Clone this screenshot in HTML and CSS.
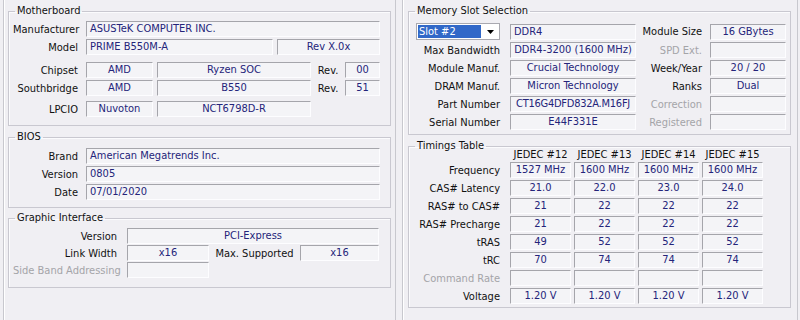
FILE: index.html
```html
<!DOCTYPE html>
<html lang="en">
<head>
    <meta charset="UTF-8">
    <meta name="viewport" content="width=device-width, initial-scale=1.0">
    <title>CPU-Z Mainboard / SPD</title>
    <link rel="stylesheet" href="styles.css">
</head>
<body>
    <div class="window">
        <!-- Mainboard tab -->
        <div class="pane pane-left">
            <fieldset class="group mb">
                <legend>Motherboard</legend>
                <div class="row">
                    <span class="lbl">Manufacturer</span>
                    <span class="fld left w294">ASUSTeK COMPUTER INC.</span>
                </div>
                <div class="row">
                    <span class="lbl">Model</span>
                    <span class="fld left w187">PRIME B550M-A</span>
                    <span class="fld w103 ml4">Rev X.0x</span>
                </div>
                <div class="row row-sep">
                    <span class="lbl">Chipset</span>
                    <span class="fld w67">AMD</span>
                    <span class="fld w154 ml4">Ryzen SOC</span>
                    <span class="sub-lbl w34">Rev.</span>
                    <span class="fld w35">00</span>
                </div>
                <div class="row">
                    <span class="lbl">Southbridge</span>
                    <span class="fld w67">AMD</span>
                    <span class="fld w154 ml4">B550</span>
                    <span class="sub-lbl w34">Rev.</span>
                    <span class="fld w35">51</span>
                </div>
                <div class="row row-sep2">
                    <span class="lbl">LPCIO</span>
                    <span class="fld w67">Nuvoton</span>
                    <span class="fld w154 ml4">NCT6798D-R</span>
                </div>
            </fieldset>

            <fieldset class="group bios">
                <legend>BIOS</legend>
                <div class="row">
                    <span class="lbl">Brand</span>
                    <span class="fld left w294">American Megatrends Inc.</span>
                </div>
                <div class="row">
                    <span class="lbl">Version</span>
                    <span class="fld left w294">0805</span>
                </div>
                <div class="row">
                    <span class="lbl">Date</span>
                    <span class="fld left w294">07/01/2020</span>
                </div>
            </fieldset>

            <fieldset class="group gi">
                <legend>Graphic Interface</legend>
                <div class="row">
                    <span class="lbl">Version</span>
                    <span class="fld w252">PCI-Express</span>
                </div>
                <div class="row">
                    <span class="lbl">Link Width</span>
                    <span class="fld w82">x16</span>
                    <span class="sub-lbl w91">Max. Supported</span>
                    <span class="fld w79">x16</span>
                </div>
                <div class="row">
                    <span class="lbl off">Side Band Addressing</span>
                    <span class="fld w82"></span>
                </div>
            </fieldset>
        </div>

        <!-- SPD tab -->
        <div class="pane pane-right">
            <fieldset class="group slot">
                <legend>Memory Slot Selection</legend>
                <div class="row row-first">
                    <div class="combo">
                        <span class="combo-value">Slot #2</span>
                        <span class="combo-btn">
                            <svg width="7" height="4" viewBox="0 0 7 4"><path d="M0 0h7L3.5 4z" fill="#000"/></svg>
                        </span>
                    </div>
                    <span class="fld left w126">DDR4</span>
                    <span class="lbl2">Module Size</span>
                    <span class="fld w76">16 GBytes</span>
                </div>
                <div class="row">
                    <span class="lbl">Max Bandwidth</span>
                    <span class="fld w126">DDR4-3200 (1600 MHz)</span>
                    <span class="lbl2 off">SPD Ext.</span>
                    <span class="fld w76"></span>
                </div>
                <div class="row">
                    <span class="lbl">Module Manuf.</span>
                    <span class="fld w126">Crucial Technology</span>
                    <span class="lbl2">Week/Year</span>
                    <span class="fld w76">20 / 20</span>
                </div>
                <div class="row">
                    <span class="lbl">DRAM Manuf.</span>
                    <span class="fld w126">Micron Technology</span>
                    <span class="lbl2">Ranks</span>
                    <span class="fld w76">Dual</span>
                </div>
                <div class="row">
                    <span class="lbl">Part Number</span>
                    <span class="fld w126 tight">CT16G4DFD832A.M16FJ</span>
                    <span class="lbl2 off">Correction</span>
                    <span class="fld w76"></span>
                </div>
                <div class="row">
                    <span class="lbl">Serial Number</span>
                    <span class="fld w126">E44F331E</span>
                    <span class="lbl2 off">Registered</span>
                    <span class="fld w76"></span>
                </div>
            </fieldset>

            <fieldset class="group timings">
                <legend>Timings Table</legend>
                <div class="row row-head">
                    <span class="lbl"></span>
                    <span class="col">JEDEC #12</span>
                    <span class="col">JEDEC #13</span>
                    <span class="col">JEDEC #14</span>
                    <span class="col">JEDEC #15</span>
                </div>
                <div class="row">
                    <span class="lbl">Frequency</span>
                    <span class="fld col">1527 MHz</span>
                    <span class="fld col">1600 MHz</span>
                    <span class="fld col">1600 MHz</span>
                    <span class="fld col">1600 MHz</span>
                </div>
                <div class="row">
                    <span class="lbl">CAS# Latency</span>
                    <span class="fld col">21.0</span>
                    <span class="fld col">22.0</span>
                    <span class="fld col">23.0</span>
                    <span class="fld col">24.0</span>
                </div>
                <div class="row">
                    <span class="lbl">RAS# to CAS#</span>
                    <span class="fld col">21</span>
                    <span class="fld col">22</span>
                    <span class="fld col">22</span>
                    <span class="fld col">22</span>
                </div>
                <div class="row">
                    <span class="lbl">RAS# Precharge</span>
                    <span class="fld col">21</span>
                    <span class="fld col">22</span>
                    <span class="fld col">22</span>
                    <span class="fld col">22</span>
                </div>
                <div class="row">
                    <span class="lbl">tRAS</span>
                    <span class="fld col">49</span>
                    <span class="fld col">52</span>
                    <span class="fld col">52</span>
                    <span class="fld col">52</span>
                </div>
                <div class="row">
                    <span class="lbl">tRC</span>
                    <span class="fld col">70</span>
                    <span class="fld col">74</span>
                    <span class="fld col">74</span>
                    <span class="fld col">74</span>
                </div>
                <div class="row">
                    <span class="lbl off">Command Rate</span>
                    <span class="fld col"></span>
                    <span class="fld col"></span>
                    <span class="fld col"></span>
                    <span class="fld col"></span>
                </div>
                <div class="row">
                    <span class="lbl">Voltage</span>
                    <span class="fld col">1.20 V</span>
                    <span class="fld col">1.20 V</span>
                    <span class="fld col">1.20 V</span>
                    <span class="fld col">1.20 V</span>
                </div>
            </fieldset>
        </div>
    </div>
</body>
</html>
```

FILE: styles.css
```css
body {
    margin: 0;
    background-color: #f0eff3;
    color: #111;
    font-family: "DejaVu Sans Condensed", "DejaVu Sans", sans-serif;
    font-size: 11px;
}
.window {
    display: flex;
    gap: 6px;
    padding-left: 3px;
    height: 320px;
    overflow: hidden;
}
.pane {
    box-sizing: border-box;
    height: 330px;
    padding-top: 4px;
    border: 1px solid #c8c8ce;
    border-top: none;
    box-shadow: inset 1px 0 0 #fff;
}
.pane-left {
    width: 393px;
    padding-left: 4px;
    padding-right: 4px;
}
.pane-right {
    width: 396px;
    padding-left: 5px;
    padding-right: 6px;
}

/* group boxes */
.group {
    margin: 0;
    min-width: 0;
    padding: 0 3px 8px 4px;
    border: 1px solid #c9c8d0;
    box-shadow: inset 1px 1px 0 #fbfbfd;
}
.group legend {
    padding: 0 2px;
    margin-left: 2px;
    line-height: 14px;
    color: #111;
}
.row {
    display: flex;
    align-items: center;
    height: 16px;
    margin-top: 2px;
    white-space: nowrap;
}
.lbl {
    flex: none;
    text-align: right;
}
.off {
    color: #a4a4a8;
}

/* sunken value boxes */
.fld {
    flex: none;
    box-sizing: border-box;
    height: 16px;
    line-height: 14px;
    border: 1px solid;
    border-color: #a5a5ab #fdfdff #fdfdff #a5a5ab;
    background-color: #f4f4f7;
    color: #24247a;
    text-align: center;
    overflow: hidden;
}
.fld.left {
    text-align: left;
    padding-left: 3px;
}
.fld.tight {
    letter-spacing: -0.25px;
}
.sub-lbl {
    flex: none;
    text-align: center;
}
.ml4 { margin-left: 4px; }
.w294 { width: 294px; }
.w252 { width: 252px; }
.w187 { width: 187px; }
.w154 { width: 154px; }
.w126 { width: 126px; }
.w103 { width: 103px; }
.w91 { width: 91px; }
.w82 { width: 82px; }
.w79 { width: 79px; }
.w76 { width: 76px; }
.w67 { width: 67px; }
.w35 { width: 35px; }
.w34 { width: 34px; }

/* Motherboard */
.mb {
    padding-top: 1px;
    padding-right: 9px;
}
.mb .lbl {
    width: 65px;
    margin-right: 8px;
}
.mb .row-sep { margin-top: 7px; }
.mb .row-sep2 { margin-top: 5px; }

/* BIOS */
.bios {
    margin-top: 4px;
    padding-top: 2px;
    padding-bottom: 7px;
}
.bios .lbl {
    width: 65px;
    margin-right: 8px;
}

/* Graphic Interface */
.gi {
    margin-top: 3px;
    padding-top: 2px;
    padding-bottom: 9px;
}
.gi .row { margin-top: 1px; }
.gi .lbl {
    width: 104px;
    margin-right: 10px;
}

/* Memory slot */
.slot {
    padding-top: 3px;
    padding-bottom: 4px;
}
.slot .lbl {
    width: 87px;
    margin-right: 10px;
}
.slot .lbl2 {
    flex: none;
    width: 66px;
    margin-right: 8px;
    text-align: right;
}
.row-first {
    height: 17px;
}
.combo {
    flex: none;
    box-sizing: border-box;
    display: flex;
    width: 84px;
    height: 17px;
    margin-left: 3px;
    margin-right: 10px;
    padding: 1px;
    border: 1px solid #a9a9b0;
    background-color: #fff;
}
.combo-value {
    flex: 1;
    background-color: #3168c8;
    color: #fff;
    line-height: 13px;
    padding-left: 1px;
}
.combo-btn {
    width: 15px;
    display: flex;
    align-items: center;
    justify-content: center;
    margin-left: 2px;
}

/* Timings */
.timings {
    margin-top: 4px;
    padding-top: 0;
    padding-bottom: 3px;
}
.timings .lbl {
    width: 87px;
    margin-right: 10px;
}
.timings .col {
    flex: none;
    width: 61px;
    margin-right: 3px;
    text-align: center;
}
.timings .row-head {
    height: 12px;
    margin-top: -4px;
    line-height: 12px;
}
.timings .row-head + .row {
    margin-top: 1px;
}
```
